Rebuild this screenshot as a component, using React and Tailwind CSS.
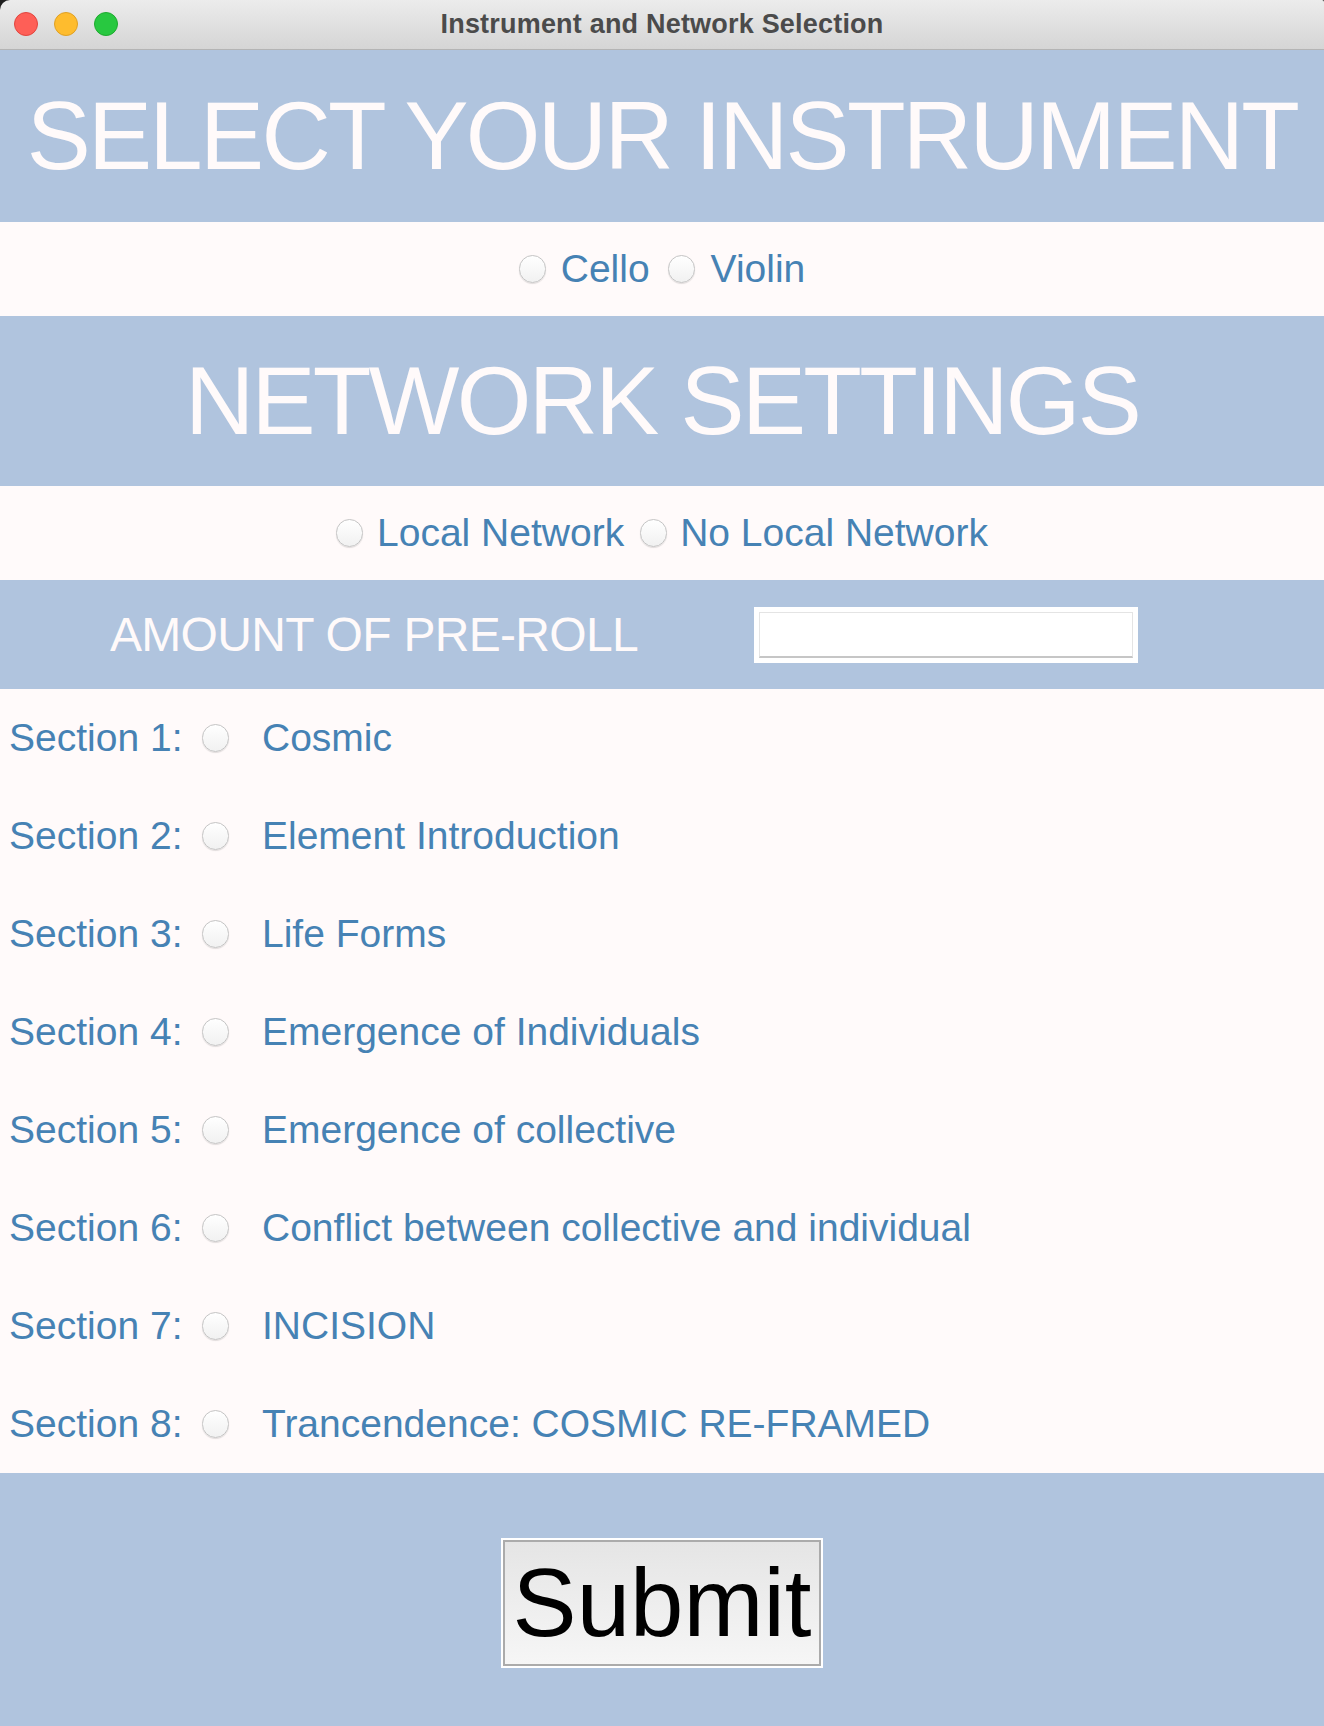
import React from 'react';

const sections = [
  'Cosmic',
  'Element Introduction',
  'Life Forms',
  'Emergence of Individuals',
  'Emergence of collective',
  'Conflict between collective and individual',
  'INCISION',
  'Trancendence: COSMIC RE-FRAMED',
];

// macOS style radio button (unchecked)
const Radio = () => (
  <span className="inline-block w-[27px] h-[28px] shrink-0 rounded-full border border-[#c4c4c4] bg-gradient-to-b from-white to-[#f1f1f1] shadow-[0_1px_1px_rgba(0,0,0,0.12)]" />
);

const Header = ({ children, className }) => (
  <div className={`flex items-center justify-center bg-[#b0c4de] ${className}`}>
    <h1 className="text-[96px] leading-none tracking-[-2.7px] text-[#fffafa] whitespace-nowrap">
      {children}
    </h1>
  </div>
);

const TitleBar = () => (
  <div className="relative h-[50px] rounded-tl-[10px] rounded-tr-[2px] border-b border-[#b4b4b4] bg-gradient-to-b from-[#ececec] to-[#d5d5d5] flex items-center justify-center">
    <div className="absolute left-[14px] top-[12px] flex gap-4">
      <span className="w-6 h-6 rounded-full bg-[#fe5f57] border border-[#e1453e]" />
      <span className="w-6 h-6 rounded-full bg-[#febc2e] border border-[#dfa024]" />
      <span className="w-6 h-6 rounded-full bg-[#28c840] border border-[#1eaa2f]" />
    </div>
    <span className="text-[27px] font-bold text-[#4b4b4b] tracking-[0.2px]">
      Instrument and Network Selection
    </span>
  </div>
);

export default function App() {
  return (
    <div className="w-[1324px] h-[1726px] overflow-hidden bg-[#1e1e1e] font-['Liberation_Sans',Arial,sans-serif]">
      <TitleBar />

      <Header className="h-[172px]">SELECT YOUR INSTRUMENT</Header>

      <div className="h-[94px] bg-[#fffafa] flex items-center justify-center text-[39px] text-[#4682b4]">
        <Radio />
        <span className="ml-[15px] mr-[18px]">Cello</span>
        <Radio />
        <span className="ml-[16px]">Violin</span>
      </div>

      <Header className="h-[170px]">NETWORK SETTINGS</Header>

      <div className="h-[94px] bg-[#fffafa] flex items-center justify-center text-[39px] text-[#4682b4]">
        <Radio />
        <span className="ml-[14px] mr-[16px]">Local Network</span>
        <Radio />
        <span className="ml-[13px]">No Local Network</span>
      </div>

      <div className="h-[109px] bg-[#b0c4de] flex items-center">
        <div className="w-[754px] pl-[110px] text-[48px] tracking-[-0.7px] text-[#fffafa] whitespace-nowrap">
          AMOUNT OF PRE-ROLL
        </div>
        <div className="w-[384px] h-[56px] bg-white p-[5px]">
          <input
            type="text"
            className="w-full h-full bg-white border border-[#e4e4e4] border-b-2 border-b-[#c6c6c6] outline-none"
          />
        </div>
      </div>

      <div className="bg-[#fffafa] text-[39px] text-[#4682b4]">
        {sections.map((name, i) => (
          <div key={i} className="h-[98px] flex items-center">
            <span className="w-[202px] pl-[9px] whitespace-nowrap">Section {i + 1}:</span>
            <Radio />
            <span className="ml-[33px] whitespace-nowrap">{name}</span>
          </div>
        ))}
      </div>

      <div className="h-[253px] bg-[#b0c4de] flex justify-center pt-[65px]">
        <button className="w-[322px] h-[130px] border-2 border-white">
          <div className="w-full h-full border-2 border-[#ababab] bg-gradient-to-b from-[#e5e5e5] to-[#f6f6f6] flex items-center justify-center text-[96px] leading-none text-black">
            Submit
          </div>
        </button>
      </div>
    </div>
  );
}
